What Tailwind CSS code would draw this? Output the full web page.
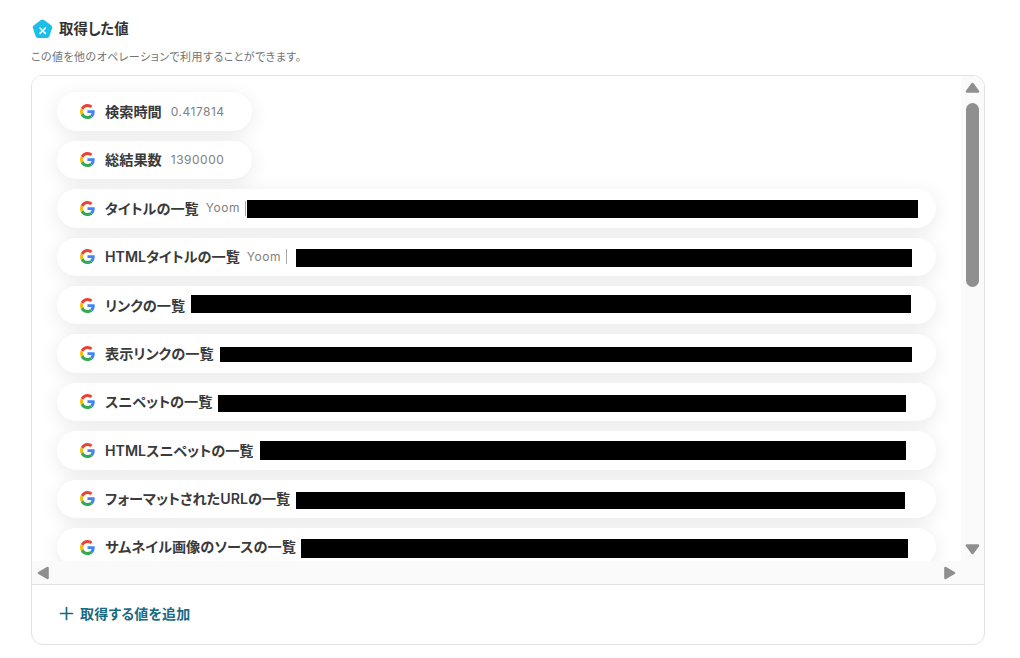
<!DOCTYPE html>
<html lang="ja">
<head>
    <meta charset="UTF-8">
    <title>取得した値</title>
    <script src="https://cdn.jsdelivr.net/npm/@tailwindcss/browser@4"></script>
</head>
<body class="bg-white font-['Inter','Noto_Sans_CJK_JP',sans-serif] [font-feature-settings:'palt'] h-[658px] overflow-hidden">
<div class="pl-[31px] pr-[35px] pt-[19px]">
    <!-- Heading -->
    <div class="flex items-center gap-[6px] h-[20px]">
        <svg class="ml-[1px] w-[21px] h-[20px]" viewBox="0 0 21 20">
            <path d="M8.900 1.100a2.600 2.600 0 0 1 3.200 0l7 5.100a2.600 2.600 0 0 1 1 2.900l-2.700 8.100a2.600 2.600 0 0 1-2.500 1.800H6.100a2.600 2.600 0 0 1-2.500-1.800L.9 9.100a2.600 2.600 0 0 1 1-2.900z" fill="#1cbfe8"/>
            <path d="M8 9l5.400 5.400M13.400 9L8 14.400" stroke="#fff" stroke-width="1.500" stroke-linecap="round"/>
        </svg>
        <h2 class="text-[14.400px] leading-[20px] font-semibold text-[#333]">取得した値</h2>
    </div>
    <p class="mt-[10px] text-[11px] tracking-[0.45px] leading-[16px] text-[#737373]">この値を他のオペレーションで利用することができます。</p>

    <!-- Card -->
    <div class="mt-[10px] h-[570px] border border-[#e2e2e2] rounded-[12px] overflow-hidden flex flex-col">
        <div class="h-[509px] relative bg-[#fafafa] border-b border-[#e2e2e2]">
            <div class="h-[485px] w-[929px] bg-white overflow-hidden pl-[25px] pt-[16.4px] flex flex-col gap-[10px]">
                <div class="w-[195px] h-[38.4px] shrink-0 rounded-full bg-white shadow-[0_4px_20px_rgba(0,0,0,0.09)] flex items-center pl-[23px]">
                    <svg class="w-[15px] h-[15px] shrink-0" viewBox="0 0 48 48"><path fill="#EA4335" d="M24 9.500c3.500 0 6.700 1.200 9.200 3.600l6.900-6.900C35.900 2.400 30.500 0 24 0 14.600 0 6.500 5.400 2.600 13.200l8 6.200C12.500 13.700 17.800 9.500 24 9.500z"/><path fill="#4285F4" d="M47 24.500c0-1.600-.1-3.100-.4-4.500H24v9h12.900c-.6 3-2.200 5.400-4.700 7.100l7.700 6c4.500-4.100 7.100-10.300 7.100-17.600z"/><path fill="#FBBC05" d="M10.600 28.600c-.5-1.500-.8-3-.8-4.600s.3-3.100.8-4.600l-8-6.200C.9 16.500 0 20.100 0 24s.9 7.500 2.600 10.800z"/><path fill="#34A853" d="M24 48c6.500 0 11.900-2.100 15.900-5.800l-7.700-6c-2.100 1.500-4.900 2.300-8.200 2.300-6.200 0-11.500-4.200-13.400-9.900l-8 6.200C6.500 42.600 14.600 48 24 48z"/></svg>
                    <span class="ml-[10px] text-[14.200px] font-semibold text-[#3a3a3a] whitespace-nowrap">検索時間</span>
                    <span class="ml-[9px] text-[12px] tracking-[0.5px] text-[#808080]">0.417814</span>
                </div>
                <div class="w-[195px] h-[38.4px] shrink-0 rounded-full bg-white shadow-[0_4px_20px_rgba(0,0,0,0.09)] flex items-center pl-[23px]">
                    <svg class="w-[15px] h-[15px] shrink-0" viewBox="0 0 48 48"><path fill="#EA4335" d="M24 9.500c3.500 0 6.700 1.200 9.200 3.600l6.900-6.900C35.900 2.400 30.500 0 24 0 14.600 0 6.500 5.400 2.600 13.200l8 6.200C12.500 13.700 17.800 9.500 24 9.500z"/><path fill="#4285F4" d="M47 24.500c0-1.600-.1-3.100-.4-4.500H24v9h12.900c-.6 3-2.200 5.400-4.700 7.100l7.700 6c4.500-4.100 7.100-10.300 7.100-17.600z"/><path fill="#FBBC05" d="M10.600 28.600c-.5-1.500-.8-3-.8-4.600s.3-3.100.8-4.600l-8-6.200C.9 16.500 0 20.100 0 24s.9 7.500 2.600 10.800z"/><path fill="#34A853" d="M24 48c6.500 0 11.900-2.100 15.900-5.800l-7.700-6c-2.100 1.500-4.900 2.300-8.200 2.300-6.200 0-11.500-4.200-13.400-9.900l-8 6.200C6.500 42.600 14.600 48 24 48z"/></svg>
                    <span class="ml-[10px] text-[14.200px] font-semibold text-[#3a3a3a] whitespace-nowrap">総結果数</span>
                    <span class="ml-[9px] text-[12px] tracking-[0.5px] text-[#808080]">1390000</span>
                </div>
                <script>
                    // Rows with a redacted value: label, preview, black bar left / width / height / offset
                    const G = document.querySelector('svg[viewBox="0 0 48 48"]').outerHTML;
                    const rows = [
                        ["タイトルの一覧", "Yoom", 247, 671, 18, 10.8],
                        ["HTMLタイトルの一覧", "Yoom", 296, 616, 18.4, 11.1],
                        ["リンクの一覧", "", 191, 720, 18.5, 9],
                        ["表示リンクの一覧", "", 220, 692, 15, 12.3],
                        ["スニペットの一覧", "", 218, 688, 17, 12.2],
                        ["HTMLスニペットの一覧", "", 260, 646, 19, 10.1],
                        ["フォーマットされたURLの一覧", "", 296, 609, 17.5, 12.1],
                        ["サムネイル画像のソースの一覧", "", 301, 607, 19, 11],
                    ];
                    document.write(rows.map(r => `<div class="relative w-[879px] h-[38.4px] shrink-0 rounded-full bg-white shadow-[0_4px_20px_rgba(0,0,0,0.09)] flex items-center pl-[23px]">${G}
                        <span class="ml-[10px] text-[14.200px] font-semibold text-[#3a3a3a] whitespace-nowrap">${r[0]}</span>
                        ${r[1] ? `<span class="ml-[7px] text-[12px] tracking-[0.5px] text-[#808080]">${r[1]}</span><span class="ml-[5px] w-[1.5px] h-[15px] bg-[#aaa]"></span>` : ""}
                        <span class="absolute bg-black" style="left:${r[2] - 57}px;width:${r[3]}px;height:${r[4]}px;top:${r[5]}px"></span>
                    </div>`).join(""));
                </script>
            </div>
            <!-- Scrollbar arrows and thumb -->
            <svg class="absolute left-[933px] top-[6px] w-[15px] h-[11px]" viewBox="0 0 15 11"><path d="M7.500 2L13 9.500H2z" fill="#8f8f8f" stroke="#8f8f8f" stroke-width="2.600" stroke-linejoin="round"/></svg>
            <div class="absolute left-[934px] top-[27px] w-[13px] h-[184px] rounded-full bg-[#8f8f8f]"></div>
            <svg class="absolute left-[933px] top-[468px] w-[15px] h-[11px]" viewBox="0 0 15 11"><path d="M2 1.500h11L7.500 9z" fill="#8f8f8f" stroke="#8f8f8f" stroke-width="2.600" stroke-linejoin="round"/></svg>
            <svg class="absolute left-[5px] top-[490px] w-[12px] h-[14px]" viewBox="0 0 12 14"><path d="M10.500 2v10L2 7z" fill="#8f8f8f" stroke="#8f8f8f" stroke-width="2.600" stroke-linejoin="round"/></svg>
            <svg class="absolute left-[912px] top-[490px] w-[12px] h-[14px]" viewBox="0 0 12 14"><path d="M1.500 2v10L10 7z" fill="#8f8f8f" stroke="#8f8f8f" stroke-width="2.600" stroke-linejoin="round"/></svg>
        </div>
        <!-- Footer -->
        <div class="flex-1 flex items-center pl-[27px] pb-[2px] gap-[6px] text-[#1a6a80]">
            <svg class="w-[15px] h-[15px]" viewBox="0 0 15 15"><path d="M7.500 1.500v12M1.500 7.500h12" stroke="#1a6a80" stroke-width="1.700" stroke-linecap="round"/></svg>
            <span class="text-[14px] tracking-[0.2px] font-semibold">取得する値を追加</span>
        </div>
    </div>
</div>
</body>
</html>
